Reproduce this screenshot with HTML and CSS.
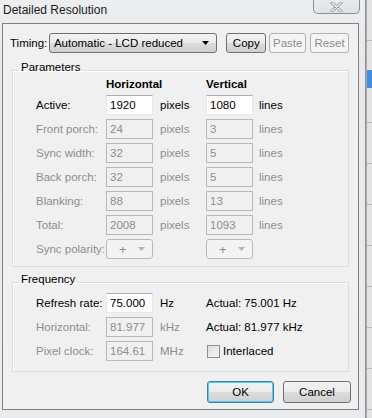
FILE: index.html
```html
<!DOCTYPE html>
<html lang="en">
<head>
  <meta charset="UTF-8" />
  <title>Detailed Resolution</title>
  <link rel="stylesheet" href="styles.css">
</head>
<body>

<div class="screen">
  <div class="window">
    <div class="titlebar">
      <span class="title">Detailed Resolution</span>
      <span class="close-btn">
        <svg width="13" height="10" viewBox="0 0 13 10">
          <path d="M2 1 L11 9 M11 1 L2 9" stroke="#8c9199" stroke-width="3" stroke-linecap="round" />
          <path d="M2 1 L11 9 M11 1 L2 9" stroke="#f4f6f8" stroke-width="1.4" stroke-linecap="round" />
        </svg>
      </span>
    </div>

    <div class="client">
      <div class="timing-row">
        <span class="timing-label">Timing:</span>
        <div class="combo">
          <span>Automatic - LCD reduced</span>
          <svg width="8" height="5" viewBox="0 0 8 5"><path d="M0 0 H7 L3.5 4 Z" fill="#000" /></svg>
        </div>
        <button class="btn btn-copy">Copy</button>
        <button class="btn btn-paste" disabled>Paste</button>
        <button class="btn btn-reset" disabled>Reset</button>
      </div>

      <fieldset class="group group-params">
        <legend>Parameters</legend>
        <div class="grid">
          <span></span>
          <span class="col-head">Horizontal</span>
          <span></span>
          <span class="col-head">Vertical</span>
          <span></span>

          <span class="lbl">Active:</span>
          <span class="field">1920</span>
          <span class="unit">pixels</span>
          <span class="field">1080</span>
          <span class="unit unit-v">lines</span>

          <span class="lbl off">Front porch:</span>
          <span class="field off">24</span>
          <span class="unit off">pixels</span>
          <span class="field off">3</span>
          <span class="unit unit-v off">lines</span>

          <span class="lbl off">Sync width:</span>
          <span class="field off">32</span>
          <span class="unit off">pixels</span>
          <span class="field off">5</span>
          <span class="unit unit-v off">lines</span>

          <span class="lbl off">Back porch:</span>
          <span class="field off">32</span>
          <span class="unit off">pixels</span>
          <span class="field off">5</span>
          <span class="unit unit-v off">lines</span>

          <span class="lbl off">Blanking:</span>
          <span class="field off">88</span>
          <span class="unit off">pixels</span>
          <span class="field off">13</span>
          <span class="unit unit-v off">lines</span>

          <span class="lbl off">Total:</span>
          <span class="field off">2008</span>
          <span class="unit off">pixels</span>
          <span class="field off">1093</span>
          <span class="unit unit-v off">lines</span>

          <span class="lbl off">Sync polarity:</span>
          <span class="polarity">
            <span>+</span>
            <svg width="8" height="5" viewBox="0 0 8 5"><path d="M0 0 H7 L3.5 4 Z" fill="#b4b4b4" /></svg>
          </span>
          <span></span>
          <span class="polarity">
            <span>+</span>
            <svg width="8" height="5" viewBox="0 0 8 5"><path d="M0 0 H7 L3.5 4 Z" fill="#b4b4b4" /></svg>
          </span>
          <span></span>
        </div>
      </fieldset>

      <fieldset class="group group-freq">
        <legend>Frequency</legend>
        <div class="grid">
          <span class="lbl">Refresh rate:</span>
          <span class="field">75.000</span>
          <span class="unit">Hz</span>
          <span class="actual">Actual: 75.001 Hz</span>

          <span class="lbl off">Horizontal:</span>
          <span class="field off">81.977</span>
          <span class="unit off">kHz</span>
          <span class="actual">Actual: 81.977 kHz</span>

          <span class="lbl off">Pixel clock:</span>
          <span class="field off">164.61</span>
          <span class="unit off">MHz</span>
          <label class="actual check">
            <span class="checkbox"></span>
            Interlaced
          </label>
        </div>
      </fieldset>

      <div class="dialog-buttons">
        <button class="btn btn-ok">OK</button>
        <button class="btn btn-cancel">Cancel</button>
      </div>
    </div>
  </div>

  <div class="backdrop">
    <div class="backdrop-bar"></div>
  </div>
</div>

</body>
</html>
```

FILE: styles.css
```css
body {
  margin: 0;
  font-family: "Liberation Sans", Arial, sans-serif;
  font-size: 11.5px;
  color: #000;
  background: #e2e2e2;
}

.screen {
  display: flex;
  width: 372px;
  height: 418px;
  overflow: hidden;
}

/* Aero frame around the dialog */
.window {
  flex: none;
  width: 366px;
  height: 418px;
  box-sizing: border-box;
  padding: 0 6px 0 2px;
  border-right: 1px solid #8f949a;
  background: linear-gradient(to bottom, #eceef0 0, #e6e8ea 60px, #e9ebed 100%);
}

.titlebar {
  display: flex;
  justify-content: space-between;
  align-items: flex-start;
  height: 23px;
}

.title {
  padding: 3px 0 0 1px;
  font-size: 12px;
  line-height: 14px;
  color: #1a1a1a;
}

.close-btn {
  display: flex;
  justify-content: center;
  align-items: flex-end;
  width: 45px;
  height: 13px;
  margin-right: -1px;
  border: 1px solid #8a9098;
  border-top: none;
  border-radius: 0 0 5px 5px;
  background: linear-gradient(to bottom, #e9ecef, #dde1e5);
}

.close-btn svg {
  margin-bottom: 1px;
}

.client {
  height: 387px;
  box-sizing: border-box;
  border: 1px solid #7d8288;
  background: #f0f0f0;
  padding: 9px 9px 0 9px;
}

/* Timing row */
.timing-row {
  display: flex;
  align-items: center;
  height: 20px;
  margin-left: -2px;
}

.timing-label {
  width: 39px;
}

.combo {
  display: flex;
  align-items: center;
  justify-content: space-between;
  width: 169px;
  height: 20px;
  box-sizing: border-box;
  padding: 0 6px 0 4px;
  border: 1px solid #707070;
  border-radius: 3px;
  background: linear-gradient(to bottom, #f2f2f2 0, #ebebeb 50%, #dddddd 50%, #cfcfcf 100%);
}

.btn {
  font-family: "Liberation Sans", Arial, sans-serif;
  font-size: 11.5px;
  height: 20px;
  padding: 0;
  box-sizing: border-box;
  border: 1px solid #707070;
  border-radius: 3px;
  background: linear-gradient(to bottom, #f2f2f2 0, #ebebeb 50%, #dddddd 50%, #cfcfcf 100%);
  color: #000;
}

.btn[disabled] {
  border-color: #adb2b5;
  background: #f4f4f4;
  color: #8d8d8d;
}

.btn-copy {
  width: 40px;
  margin-left: 9px;
}

.btn-paste {
  width: 37px;
  margin-left: 3px;
}

.btn-reset {
  width: 39px;
  margin-left: 4px;
}

/* Group boxes */
.group {
  margin: 0;
  padding: 0;
  border: 1px solid #d5dfe5;
  box-shadow: inset 1px 1px 0 #fff;
}

.group legend {
  margin-left: 6px;
  padding: 0 2px 6px;
  line-height: 12px;
}

.group-params {
  margin-top: 8px;
  padding-bottom: 7px;
}

.group-freq {
  margin-top: 6px;
  padding-top: 2px;
  padding-bottom: 10px;
}

.grid {
  display: grid;
  grid-template-columns: 70px 47px 53px 47px auto;
  grid-auto-rows: 20px;
  row-gap: 4px;
  align-items: center;
  padding-left: 23px;
  white-space: nowrap;
}

.group-params .grid {
  grid-template-rows: 12px;
}

.col-head {
  font-weight: bold;
  line-height: 10px;
  align-self: start;
}

.lbl.off,
.unit.off {
  color: #8d8d8d;
}

.field {
  height: 20px;
  box-sizing: border-box;
  padding: 0 3px;
  line-height: 18px;
  border: 1px solid #e3e9ef;
  border-top-color: #abadb3;
  background: #fff;
}

.field.off {
  border-color: #b5b9bd;
  background: #f0f0f0;
  color: #8d8d8d;
}

.unit {
  padding-left: 7px;
}

.unit-v {
  padding-left: 6px;
}

.polarity {
  display: flex;
  align-items: center;
  justify-content: space-between;
  height: 20px;
  box-sizing: border-box;
  padding: 0 6px 0 12px;
  border: 1px solid #b5b9bd;
  border-radius: 3px;
  background: #f3f3f3;
  color: #8d8d8d;
  font-size: 13px;
}

.actual {
  grid-column: 4 / 6;
}

.check {
  display: flex;
  align-items: center;
  gap: 3px;
  padding-left: 1px;
}

.checkbox {
  width: 11px;
  height: 11px;
  border: 1px solid #8e8f8f;
  background: linear-gradient(to bottom right, #dcdcdc, #f6f6f6);
}

/* OK / Cancel */
.dialog-buttons {
  display: flex;
  justify-content: flex-end;
  gap: 9px;
  margin: 9px -2px 0 0;
}

.btn-ok,
.btn-cancel {
  height: 22px;
  width: 68px;
}

.btn-ok {
  width: 67px;
  border-color: #3c7fb1;
  box-shadow: inset 0 0 0 1px #48d0f7;
}

/* Window behind the dialog */
.backdrop {
  flex: 1;
  background: repeating-linear-gradient(to bottom, #e4e4e4 0, #e4e4e4 40px, #b9b9b9 40px, #b9b9b9 41px);
  border-left: 1px solid #a9a9a9;
}

.backdrop-bar {
  height: 18px;
  margin-top: 70px;
  background: #3b8fe5;
}
```
